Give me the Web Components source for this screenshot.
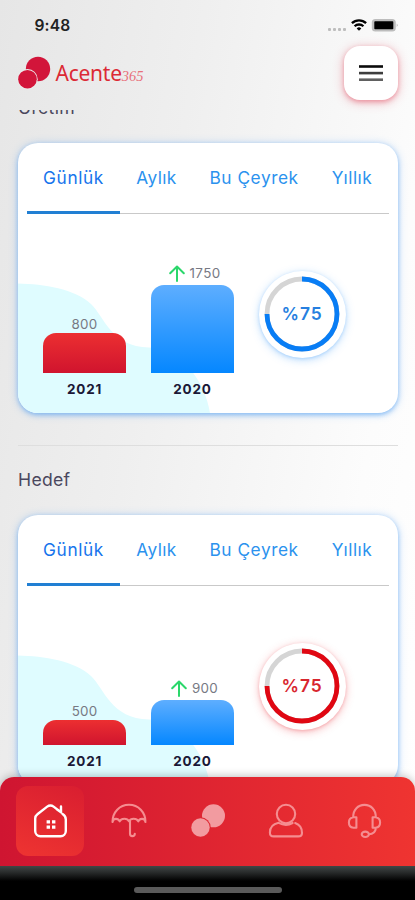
<!DOCTYPE html>
<html lang="tr"><head><meta charset="utf-8"><title>Acente365</title>
<style>
html,body{margin:0;height:100%}
body{font-family:Inter,"Liberation Sans",sans-serif;overflow:hidden;background:#fff}
</style></head><body>
<acente-app></acente-app>
<script>
function define(name, build){
  customElements.define(name, class extends HTMLElement{
    connectedCallback(){
      if(this.shadowRoot) return;
      this.attachShadow({mode:'open'}).innerHTML = build(this);
    }
  });
}

define('status-bar', () => `
<style>
:host{display:flex;height:44px;align-items:flex-start;justify-content:space-between;padding:0 16px 0 34.5px;box-sizing:border-box}
.t{font:600 15.6px/20px Inter,sans-serif;color:#222;margin-top:15.5px;letter-spacing:.1px}
svg{margin-top:15px}
</style>
<span class="t">9:48</span>
<svg width="72" height="20" viewBox="327 15 72 20">
<g fill="#bdbdbd"><rect x="328" y="28" width="3" height="3" rx="1"/><rect x="333" y="28" width="3" height="3" rx="1"/><rect x="338" y="28" width="3" height="3" rx="1"/><rect x="343" y="28" width="3" height="3" rx="1"/></g>
<g fill="none" stroke="#000" stroke-width="2.3"><path d="M351.9 23.2a10.2 10.2 0 0 1 14.2 0"/><path d="M354.6 26.3a6.3 6.3 0 0 1 8.8 0"/></g>
<path d="M356.7 28.4a3.4 3.4 0 0 1 4.6 0L359 30.8z"/>
<rect x="371.8" y="19" width="24" height="12.6" rx="3.6" fill="#bdbdbd"/><rect x="374.3" y="21.3" width="19" height="8" rx=".8"/><path d="M396.8 23.5q1.7 1.8 0 3.6z" fill="#999"/>
</svg>`);

define('brand-logo', () => `
<style>
:host{display:flex;align-items:flex-start}
.n{font:400 21px/26px "Noto Sans",sans-serif;color:#dc2a35;margin:4px 0 0 4.5px;letter-spacing:-.25px;white-space:nowrap}
i{font:italic 300 14.4px/16px "Liberation Serif",serif;color:#e8707a;letter-spacing:0}
</style>
<svg width="34" height="34" viewBox="17 56 34 34"><circle cx="38" cy="69" r="12.2" fill="#d2153a"/><circle cx="27.5" cy="79.2" r="10.2" fill="#ececec"/><circle cx="27.5" cy="79.2" r="9.3" fill="#d2153a"/></svg>
<span class="n">Acente<i>365</i></span>`);

define('menu-button', () => `
<style>
:host{display:grid;place-items:center;width:54px;height:54px;border-radius:16px;background:#fff;box-shadow:0 2px 4px rgba(226,70,92,.38),0 2px 11px rgba(226,70,92,.4)}
</style>
<svg width="24" height="18" viewBox="0 0 24 18"><path fill="#0a0a0a" d="M0 1.2h24v2.6H0z"/><path fill="#3d3d3d" d="M0 7.8h24v2.6H0z"/><path fill="#606060" d="M0 14.4h24V17H0z"/></svg>`);

define('app-header', () => `
<style>
:host{display:flex;height:66px;box-sizing:border-box;justify-content:space-between;padding:2px 17px 0 17px}
brand-logo{margin-top:10px}
</style>
<brand-logo></brand-logo><menu-button></menu-button>`);

define('period-tabs', () => `
<style>
:host{display:block;height:72px;margin:0 9px}
.r{display:grid;grid-template-columns:93px 73px 122px 74px;height:71px;border-bottom:1px solid #c9c9c9;box-sizing:border-box}
span{font:400 17.3px/24px Inter,sans-serif;color:#2b92ee;height:71px;box-sizing:border-box;padding-top:22.5px;text-align:center;white-space:nowrap}
span.a{color:#1674ec;border-bottom:3px solid #217fd3}
</style>
<div class="r"><span class="a" style="letter-spacing:.6px">Günlük</span><span style="letter-spacing:.4px">Aylık</span><span style="letter-spacing:.55px">Bu Çeyrek</span><span style="letter-spacing:.5px">Yıllık</span></div>`);

define('year-bar', el => `
<style>
:host{display:flex;flex-direction:column;width:83px;align-items:center}
.v{display:flex;align-items:center;gap:5px;font:400 13.4px/18px Inter,sans-serif;color:#777983;letter-spacing:.2px}
:host([up]) .v{padding:0 0 3px 4px;letter-spacing:.35px}
.b{width:83px;height:${el.getAttribute('size')}px;border-radius:13px 13px 0 0;background:${el.getAttribute('tone')==='red'?'linear-gradient(#ec2f31,#d0142e)':'linear-gradient(#5eaeff,#0587ff)'}}
.y{font:700 13.5px/18px Inter,sans-serif;color:#1b1837;margin-top:7px;letter-spacing:.8px}
svg{display:block;margin-top:1px}
</style>
<div class="v">${el.hasAttribute('up')?'<svg width="16" height="17" viewBox="0 0 16 17" fill="none" stroke="#2bd76b" stroke-width="2" stroke-linecap="round" stroke-linejoin="round"><path d="M8 16V1.5M1.2 8.2 8 1.5l6.8 6.7"/></svg>':''}<span>${el.getAttribute('value')}</span></div>
<div class="b"></div><div class="y"><slot></slot></div>`);

define('progress-ring', el => {
  const red = el.getAttribute('tone')==='red';
  const c = red?'#e00712':'#087df5', s = red?'235,60,70':'60,155,250';
  return `
<style>
:host{display:grid;place-items:center;width:87px;height:87px;border-radius:50%;background:#fff;box-shadow:0 1px 3px rgba(${s},.25),0 2px 9px rgba(${s},.35)}
svg,span{grid-area:1/1}
span{font:600 17.4px/22px Inter,sans-serif;color:${red?'#d8262e':'#267fe0'};letter-spacing:.9px}
</style>
<svg width="76" height="76" viewBox="-38 -38 76 76" fill="none" stroke-width="4.8"><circle r="35" stroke="#d5d5d5"/><path d="M0-35A35 35 0 1 1-35 0" stroke="${c}"/></svg>
<span><slot></slot></span>`;
});

define('stat-card', () => `
<style>
:host{display:grid;width:380px;height:270px;border-radius:20px;background:#fff;box-shadow:0 2px 4px rgba(55,145,240,.4),0 1px 9px rgba(75,155,245,.42)}
.blob{grid-area:1/1;align-self:end;display:block;border-bottom-left-radius:20px}
.c{grid-area:1/1}
.d{display:flex;height:198px;padding-left:25px;box-sizing:border-box}
.bars{display:flex;gap:25px;align-items:flex-end;padding-bottom:15px}
::slotted(progress-ring){margin:55.5px 0 0 24.5px}
</style>
<svg class="blob" width="200" height="132" viewBox="18 281 200 132"><path fill="#dffcff" d="M18 283.5C44 284 75 289 91 304C104 316 111 347 149 347.5C180 348 205 380 210 413H18z"/></svg>
<div class="c"><period-tabs></period-tabs><div class="d"><div class="bars"><slot name="bar"></slot></div><slot></slot></div></div>`);

const icons = {
home:'<path d="M31.8 15.6V27a5.2 5.2 0 0 1-5.2 5.2H6.4A5.2 5.2 0 0 1 1.2 27V14.6c0-2 .7-3.3 2.2-4.4L13.2 2.6q3.2-2.4 6.4 0l6 4.7M22.8 5.2 27 8.4V2.4M28.6 10q3.2 1.9 3.2 5.6" stroke-width="2.4"/><path d="M12.6 16.2h3.4v3.4h-3.4zm5.4 0h3.4v3.4H18zM12.6 21.4h3.4v3.4h-3.4zm5.4 0h3.4v3.4H18z" fill="#fff" stroke="none"/>',
umbrella:'<path d="M.5 18C.5 8.2 7.6.8 17 .8S33.5 8.2 33.5 18c-.8-4-5.6-4-7.2-.7-1.6-3.5-7.6-3.5-9.3 0-1.7-3.5-7.7-3.5-9.3 0-1.6-3.3-6.4-3.3-7.2.7zM18 16.8v12.9a2.4 2.4 0 0 0 4.8 0"/>',
dots:'<circle cx="22.5" cy="11.8" r="11.5" fill="#f29ba0" stroke="none"/><circle cx="9.5" cy="23.5" r="10.2" fill="#df2733" stroke="none"/><circle cx="9.5" cy="23.5" r="9.2" fill="#f29ba0" stroke="none"/>',
user:'<circle cx="17" cy="10" r="9.2"/><path d="M9.6 18.8C4 19.9.9 23.7.9 28.7c0 2.6 1.5 3.7 3.7 3.7h24.6c2.4 0 3.8-1.2 3.8-3.5 0-4.7-2.2-8.1-6.8-9.8M9.6 18.8c4.4 2.4 10 2.4 14 .2"/>',
support:'<path d="M5.2 13C5.2 5.6 10 .9 16.5.9S27.8 5.6 27.8 13M5.4 13.2C2.5 13.6.9 15.5.9 18.5c0 2.8 1.6 4.9 4.5 5.2h3V13.2zM27.6 13.2c2.9.4 4.5 2.3 4.5 5.3 0 2.8-1.6 4.9-4.5 5.2h-3V13.2zM28 23.7c-.5 4.2-3 6.6-7 6.6"/><ellipse cx="17.3" cy="30.3" rx="3.6" ry="2.7"/>'};
define('nav-item', el => `
<style>
:host{display:grid;place-items:center;width:68px;height:70px;border-radius:12px}
:host([active]){background:linear-gradient(200deg,#d91e30,#ee3431)}
svg{overflow:visible;display:block;margin-left:2px}
</style>
<svg width="34" height="34" viewBox="0 0 34 34" fill="none" stroke="${el.hasAttribute('active')?'#fff':'#f58d90'}" stroke-width="2.1" stroke-linecap="round" stroke-linejoin="round">${icons[el.getAttribute('icon')]}</svg>`);

define('bottom-nav', () => `
<style>
:host{display:flex;height:89px;box-sizing:border-box;padding:9px 0 0 16px;gap:10.4px;border-radius:14px 14px 0 0;background:linear-gradient(90deg,#cf1531,#ef3431);box-shadow:0 -1px 8px rgba(0,0,0,.25);margin-top:-13px;position:relative}
</style>
<nav-item icon="home" active></nav-item><nav-item icon="umbrella"></nav-item><nav-item icon="dots"></nav-item><nav-item icon="user"></nav-item><nav-item icon="support"></nav-item>`);

define('home-indicator', () => `
<style>
:host{display:flex;height:34px;justify-content:center;background:linear-gradient(#414646,#2a2d2d 6px,#000 15px);position:relative}
div{width:148px;height:6px;margin-top:21px;border-radius:3px;background:#5a5a5a}
</style><div></div>`);

define('acente-app', () => `
<style>
:host{display:flex;flex-direction:column;width:415px;height:900px;overflow:hidden;background:linear-gradient(100deg,#e6e6e6,#efefef 36%,#fcfcfc 78%,#fff)}
main{flex:1;min-height:0;overflow:hidden;padding:0 17px 0 18px}
h2{margin:0;font:400 17.6px/24px Inter,sans-serif;color:#4a475d;letter-spacing:.3px}
.first{margin-top:-14px}
.first + stat-card{margin-top:23px}
hr{border:0;height:1px;background:#dedede;margin:32px 0 22px}
.second{margin-bottom:23px}
</style>
<status-bar></status-bar><app-header></app-header>
<main>
<h2 class="first">Üretim</h2>
<stat-card><year-bar slot="bar" tone="red" size="40" value="800">2021</year-bar><year-bar slot="bar" size="88" value="1750" up>2020</year-bar><progress-ring>%75</progress-ring></stat-card>
<hr>
<h2 class="second">Hedef</h2>
<stat-card><year-bar slot="bar" tone="red" size="25" value="500">2021</year-bar><year-bar slot="bar" size="45" value="900" up>2020</year-bar><progress-ring tone="red">%75</progress-ring></stat-card>
</main>
<bottom-nav></bottom-nav><home-indicator></home-indicator>`);
</script>
</body></html>
